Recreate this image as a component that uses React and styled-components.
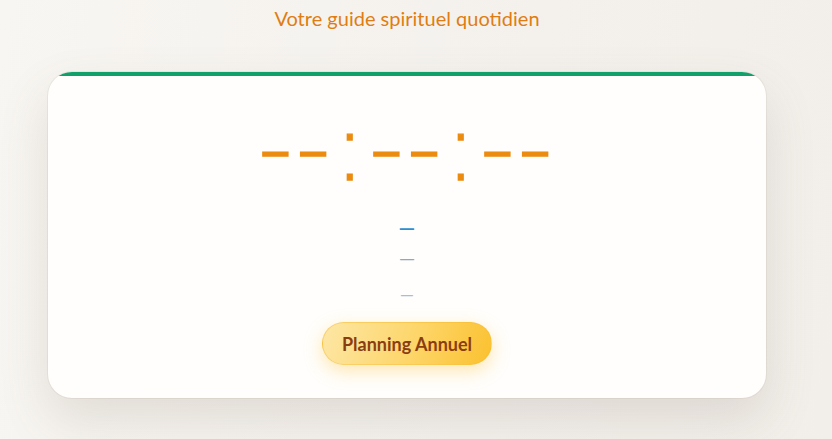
import React from "react";
import styled, { createGlobalStyle } from "styled-components";

const GlobalStyle = createGlobalStyle`
  html, body {
    margin: 0;
    padding: 0;
  }
  body {
    width: 832px;
    height: 439px;
    overflow: hidden;
    font-family: "Lato", "Noto Sans", sans-serif;
    background: linear-gradient(100deg, #f8f6f2 0%, #f4f1ed 60%, #f2efea 100%);
  }
`;

const StyledPage = styled.div`
  width: 814px;
  display: flex;
  flex-direction: column;
  align-items: center;
`;

const StyledSubtitle = styled.p`
  margin: 5px 0 0;
  font-size: 20px;
  line-height: 26px;
  color: #e07d12;
`;

const StyledCard = styled.div`
  box-sizing: border-box;
  width: 718px;
  height: 326px;
  margin-top: 41px;
  background: #fffefc;
  border-radius: 24px;
  overflow: hidden;
  box-shadow: 0 22px 50px rgba(110, 95, 75, 0.16), 0 0 0 1px rgba(220, 215, 205, 0.4);
  display: flex;
  flex-direction: column;
  align-items: center;
`;

const StyledAccent = styled.div`
  align-self: stretch;
  height: 4px;
  flex-shrink: 0;
  background: #12a06a;
`;

const StyledClock = styled.div`
  margin-top: 21px;
  font-family: "DejaVu Sans", sans-serif;
  font-size: 95px;
  font-weight: 200;
  line-height: 100px;
  color: #eb8b10;
  -webkit-text-stroke: 1.4px #eb8b10;
  letter-spacing: 3.5px;
  white-space: nowrap;
`;

const StyledDetails = styled.div`
  margin-top: 15px;
  display: flex;
  flex-direction: column;
  align-items: center;
`;

const StyledLine = styled.div`
  font-size: ${(props) => props.size}px;
  font-weight: ${(props) => (props.bold ? 700 : 400)};
  color: ${(props) => props.color};
  line-height: ${(props) => props.height}px;
`;

const StyledButton = styled.button`
  margin-top: 8px;
  width: 170px;
  height: 43px;
  border: 1px solid rgba(245, 190, 60, 0.5);
  border-radius: 22px;
  background: linear-gradient(110deg, #fde7a6 0%, #fdd568 55%, #fbc12f 100%);
  box-shadow: 0 6px 18px rgba(251, 190, 40, 0.35);
  font-family: "Lato", sans-serif;
  font-size: 18px;
  font-weight: 700;
  color: #8b3d12;
  cursor: pointer;
`;

const infoLines = [
  { text: "—", size: 21, bold: true, color: "#2b8fd2", height: 30 },
  { text: "—", size: 21, bold: false, color: "#94a6ba", height: 32 },
  { text: "—", size: 18, bold: false, color: "#a9bed6", height: 40 },
];

const App = () => {
  return (
    <>
      <GlobalStyle />
      <StyledPage>
        <StyledSubtitle>Votre guide spirituel quotidien</StyledSubtitle>
        <StyledCard>
          <StyledAccent />
          <StyledClock>--:--:--</StyledClock>
          <StyledDetails>
            {infoLines.map((line, i) => (
              <StyledLine
                key={i}
                size={line.size}
                bold={line.bold}
                color={line.color}
                height={line.height}
              >
                {line.text}
              </StyledLine>
            ))}
          </StyledDetails>
          <StyledButton>Planning Annuel</StyledButton>
        </StyledCard>
      </StyledPage>
    </>
  );
};

export default App;
